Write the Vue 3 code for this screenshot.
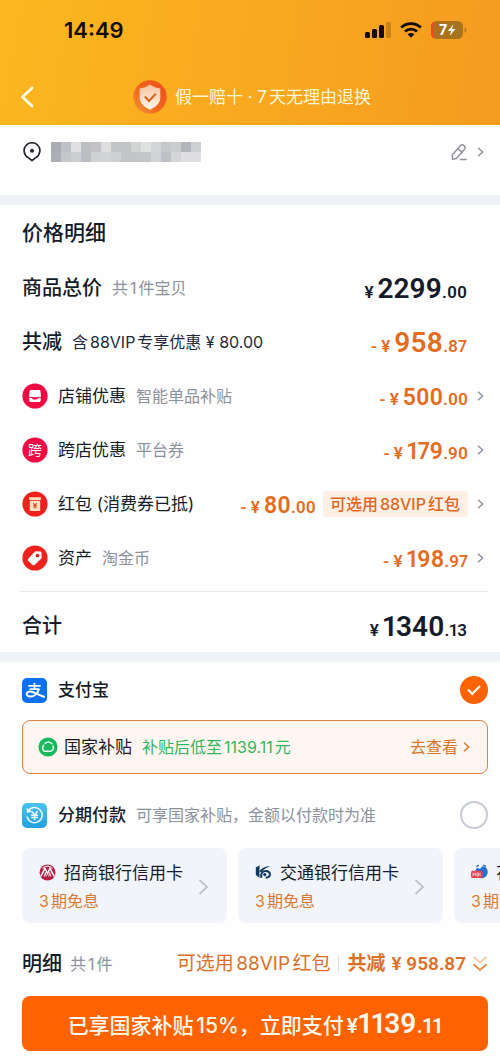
<script setup>
import { ref } from 'vue'

const payMethod = ref('alipay')

const mosaic = [
  '#a9abb2', '#c0c1c6', '#e0e0e3', '#bdbec2', '#c2c2c6', '#dededf', '#c4c5c8', '#c3c4c7', '#d2d4d4', '#e0e1e1', '#d3d6d6', '#c6c7cb', '#cbcccf', '#b4b5ba', '#cecfd2',
  '#acaeb5', '#c6c7cb', '#cdced2', '#bcbdc3', '#d0d1d4', '#d2d3d6', '#cecfd1', '#c3c4c7', '#c4c5c8', '#c5c6c9', '#d1d4d5', '#bfc1c6', '#d4d5d8', '#dfdfe2', '#dedee1',
]

const discounts = [
  { icon: 'shop', name: '店铺优惠', note: '智能单品补贴', int: '500', dec: '.00' },
  { icon: 'cross', name: '跨店优惠', note: '平台券', int: '179', dec: '.90' },
  { icon: 'packet', name: '红包 (消费券已抵)', note: '', int: '80', dec: '.00', chip: '可选用88VIP红包' },
  { icon: 'tag', name: '资产', note: '淘金币', int: '198', dec: '.97' },
]

const cards = [
  { icon: 'cmb', name: '招商银行信用卡', offer: '3期免息' },
  { icon: 'comm', name: '交通银行信用卡', offer: '3期免息' },
  { icon: 'huabei', name: '花呗', offer: '3期免息' },
]
</script>

<template>
  <div class="page">
    <header class="header">
      <div class="status">
        <span class="time">14:49</span>
        <div class="status-icons">
          <svg width="26" height="16" viewBox="0 0 26 16" aria-hidden="true">
            <rect x="0" y="10" width="5" height="6" rx="1.5" fill="#120c04" />
            <rect x="7" y="7" width="5" height="9" rx="1.5" fill="#120c04" />
            <rect x="14" y="3" width="5" height="13" rx="1.5" fill="#120c04" />
            <rect x="21" y="0" width="5" height="16" rx="1.5" fill="#c98318" />
          </svg>
          <svg width="22" height="16" viewBox="0 0 22 16" aria-hidden="true">
            <g fill="none" stroke="#120c04" stroke-width="2.8">
              <path d="M1.2 5.6C6.600 .2 15.400 .2 20.800 5.600" />
              <path d="M5 9.600c3.400-3.300 8.600-3.300 12 0" />
            </g>
            <path d="M7.600 12.200c1.900-1.700 4.900-1.700 6.800 0L11 15.800z" fill="#120c04" />
          </svg>
          <svg width="36" height="18" viewBox="0 0 36 18" aria-hidden="true">
            <defs><clipPath id="cell"><rect width="32" height="18" rx="5.500" /></clipPath></defs>
            <g clip-path="url(#cell)">
              <rect width="32" height="18" fill="#a8731c" />
              <rect width="3" height="18" fill="#ee4a26" />
            </g>
            <path d="M33.500 6.200c2.400.8 2.400 4.800 0 5.600z" fill="#b87a1c" />
            <text x="8" y="14" class="battery-text">7</text>
            <path d="M22.400 3.400 16.800 10h3.400l-1.400 4.800 5.600-6.800h-3.400z" fill="#fff" />
          </svg>
        </div>
      </div>
      <div class="nav">
        <button class="back" aria-label="返回">
          <svg width="14" height="22" viewBox="0 0 14 22"><path d="M12 2 2.500 11 12 20" fill="none" stroke="#fffbe8" stroke-width="2.800" stroke-linecap="round" stroke-linejoin="round" /></svg>
        </button>
        <div class="promise">
          <svg width="34" height="34" viewBox="0 0 34 34" aria-hidden="true">
            <defs>
              <linearGradient id="disc" x1="1" y1="0" x2="0" y2="1"><stop offset="0" stop-color="#ee4f17" /><stop offset=".55" stop-color="#f0661f" /><stop offset="1" stop-color="#f79a35" /></linearGradient>
              <linearGradient id="shield" x1="0" y1="0" x2="0" y2="1"><stop offset="0" stop-color="#fbc4a0" /><stop offset="1" stop-color="#fff6ec" /></linearGradient>
            </defs>
            <circle cx="17" cy="17" r="16.700" fill="url(#disc)" />
            <path d="M17 4.600c3.200 2.500 6.500 3.600 10.300 3.800v9.400c0 5.700-4.500 9-10.300 12-5.800-3-10.300-6.300-10.300-12V8.400C10.500 8.200 13.800 7.100 17 4.600z" fill="url(#shield)" />
            <path d="m11.800 16.600 4.200 4.300 6.800-7.100" fill="none" stroke="#d9661f" stroke-width="2.200" />
          </svg>
          <span>假一赔十 · 7天无理由退换</span>
        </div>
      </div>
    </header>

    <main>
      <section class="address">
        <svg width="18" height="20" viewBox="0 0 18 20" aria-hidden="true">
          <path d="M9 18.600 4.900 15.400A7.900 7.900 0 1 1 13.100 15.400z" fill="none" stroke="#23252e" stroke-width="1.700" stroke-linejoin="round" />
          <circle cx="9" cy="8.800" r="2" fill="#23252e" />
        </svg>
        <div class="mosaic" aria-hidden="true">
          <i v-for="(c, i) in mosaic" :key="i" :style="{ background: c }"></i>
        </div>
        <button class="edit" aria-label="修改地址">
          <svg width="16" height="17" viewBox="0 0 16 17">
            <g fill="none" stroke="#92939d" stroke-width="1.500" stroke-linejoin="round" stroke-linecap="round">
              <path d="M1.500 15.200 1.300 11 9 2c1.300-1.400 3-1.400 4.200-.3 1.200 1.100 1.200 2.500.1 3.800L5.400 14.600z" />
              <path d="m6.900 4.600 4.300 3.900M9.500 15.500h5.500" />
            </g>
          </svg>
          <svg class="chev" width="7" height="12" viewBox="0 0 7 12"><path d="m1 1.800 4.600 4.200L1 10.200" /></svg>
        </button>
      </section>

      <section class="prices">
        <h2>价格明细</h2>
        <div class="row">
          <strong>商品总价</strong><span class="note">共1件宝贝</span>
          <span class="amount big"><small>¥</small><b>2299</b><small>.00</small></span>
        </div>
        <div class="row">
          <strong>共减</strong><span class="note dark">含88VIP专享优惠 ¥ 80.00</span>
          <span class="amount mid orange"><small>- ¥</small><b>958</b><small>.87</small></span>
        </div>
        <button v-for="d in discounts" :key="d.name" class="row item">
          <svg class="badge" width="26" height="26" viewBox="0 0 26 26" aria-hidden="true">
            <circle cx="13" cy="13" r="12.600" :fill="d.icon === 'shop' || d.icon === 'cross' ? '#ee0a43' : '#ee211d'" />
            <template v-if="d.icon === 'shop'">
              <path d="M8.800 6.900h8.400c.7 0 1.100.3 1.200 1l.6 5c0 1.500-2.200 1.700-3 .5-.8 1.200-2.400 1.200-3 0-.6 1.200-2.200 1.200-3 0-.8 1.200-3 1-3-.5l.6-5c.1-.7.5-1 1.200-1z" fill="#fff" />
              <path d="M7.300 14.900h2c1 0 1.200 1.600 2.200 1.600h3c1 0 1.200-1.600 2.200-1.600h2v2.600c0 .9-.6 1.500-1.500 1.500H8.800c-.9 0-1.500-.6-1.500-1.500z" fill="#fff" />
            </template>
            <text v-else-if="d.icon === 'cross'" x="13" y="18" class="badge-text">跨</text>
            <template v-else-if="d.icon === 'packet'">
              <path d="M7.200 6.200h11.600v2.700H7.200zM7.800 9.700h10.400v9.200c0 .7-.5 1.200-1.200 1.200H9c-.7 0-1.200-.5-1.200-1.200z" fill="#ffe2c2" />
              <path d="m11.200 12 1.800 2 1.800-2M13 14v3.500M11 14.200h4M11 16h4" fill="none" stroke="#dc4928" stroke-width="1.100" />
            </template>
            <template v-else>
              <path d="m6.300 13.700 6.200-6.800c.4-.4.8-.6 1.300-.6l4.200.2c.9 0 1.500.7 1.500 1.500l.1 4.400c0 .5-.2.900-.5 1.300l-6.300 6.100c-.8.700-1.700.7-2.400 0l-4-3.700c-.8-.7-.8-1.600-.1-2.400z" fill="#fff" />
              <circle cx="15.500" cy="10.600" r="1.900" fill="#ee211d" />
            </template>
          </svg>
          <span class="name">{{ d.name }}</span>
          <span v-if="d.note" class="note">{{ d.note }}</span>
          <span class="amount small orange"><small>- ¥</small><b>{{ d.int }}</b><small>{{ d.dec }}</small></span>
          <span v-if="d.chip" class="chip">{{ d.chip }}</span>
          <svg class="chev" width="7" height="12" viewBox="0 0 7 12" aria-hidden="true"><path d="m1 1.800 4.600 4.200L1 10.200" /></svg>
        </button>
        <div class="row total">
          <strong>合计</strong>
          <span class="amount big"><small>¥</small><b>1340</b><small>.13</small></span>
        </div>
      </section>

      <section class="pay">
        <label class="method">
          <svg width="25" height="25" viewBox="0 0 25 25" aria-hidden="true">
            <rect width="25" height="25" rx="5" fill="#0b70f2" />
            <g fill="none" stroke="#fff">
              <path d="M6.300 7.800h12.400M12.500 5v6M7.500 11.200h9.800" stroke-width="1.700" />
              <path d="M17 11c-1.500 4.200-4.500 7.600-8.300 7.600-2.400 0-4-1-4-2.700 0-1.700 1.700-2.500 3.500-2.300 4.300.4 8 3.300 14.600 5.400" stroke-width="2" />
            </g>
          </svg>
          <span class="name medium">支付宝</span>
          <input v-model="payMethod" type="radio" name="pay" value="alipay" />
        </label>
        <button class="subsidy">
          <svg width="20" height="20" viewBox="0 0 20 20" aria-hidden="true">
            <circle cx="10" cy="10" r="9.600" fill="#18b85c" />
            <path d="M6.200 14.300h6.300c2.300-.9 3.300-3.200 2.600-5.400M6.200 14.300C4.600 12.800 4.300 10.300 5.400 8.300M7.200 6.400C9.200 4.700 12 4.900 13.800 6.700" fill="none" stroke="#e9fff0" stroke-width="1.500" stroke-linecap="round" />
          </svg>
          <span class="name">国家补贴</span>
          <span class="green">补贴后低至1139.11元</span>
          <span class="view">去查看</span>
          <svg class="chev warm" width="7" height="12" viewBox="0 0 7 12" aria-hidden="true"><path d="m1 1.800 4.600 4.200L1 10.200" /></svg>
        </button>
        <label class="method second">
          <svg width="25" height="25" viewBox="0 0 25 25" aria-hidden="true">
            <defs><linearGradient id="inst" x1="0" y1="0" x2="0" y2="1"><stop offset="0" stop-color="#4cc3ee" /><stop offset="1" stop-color="#249fe0" /></linearGradient></defs>
            <rect width="25" height="25" rx="5" fill="url(#inst)" />
            <g fill="none" stroke="#eefaff" stroke-width="1.500" stroke-linecap="round">
              <path d="M6 8.200a7.600 7.600 0 1 1-.8 5.800M5.300 5.800 5.800 8.800 8.800 8.300" />
              <path d="m10 8.700 2.600 3.300 2.600-3.300M12.600 12v4.600M9.800 12.300h5.600M9.800 14.500h5.600" />
            </g>
          </svg>
          <span class="name medium">分期付款</span>
          <span class="note">可享国家补贴，金额以付款时为准</span>
          <input v-model="payMethod" type="radio" name="pay" value="installment" />
        </label>
        <div class="cards">
          <button v-for="c in cards" :key="c.name" class="card">
            <span class="card-body">
              <span class="bank">
                <svg v-if="c.icon === 'cmb'" width="17" height="17" viewBox="0 0 17 17" aria-hidden="true">
                  <circle cx="8.500" cy="8.500" r="8" fill="#b31f43" />
                  <path d="M1.800 12.300 6 4.300l2.500 5.200L11 4.300l4.200 8" fill="none" stroke="#fff" stroke-width="1.500" />
                  <path d="M5.300 12.500 6.300 8.500l1 4M9.700 12.500l1-4 1 4" fill="none" stroke="#fff" stroke-width=".9" />
                  <path d="M3.500 4.500C6 1.300 11 1.300 13.500 4.500" fill="none" stroke="#f3d8df" stroke-width="1.200" />
                </svg>
                <svg v-else-if="c.icon === 'comm'" width="17" height="17" viewBox="0 0 17 17" aria-hidden="true">
                  <path d="M.8 3.500 4.500 1.300v12.400L.8 11zM4.500 7c2.300-3.600 6.500-5 11-4.800C11.800 3.200 8.500 5 6 8.800z" fill="#12395f" />
                  <path d="M6.300 13.800C5.500 9 8 6.800 10.700 6.900c2.700.1 4.200 1.700 4.200 3.400 0 2-1.500 3.300-4.200 3.400" fill="none" stroke="#12395f" stroke-width="2" />
                  <circle cx="9.800" cy="10.600" r="1.600" fill="#12395f" />
                </svg>
                <svg v-else width="17" height="17" viewBox="0 0 17 17" aria-hidden="true">
                  <path d="M4.500 6.500C5 4.500 6.500 3.500 8 4.500c.8.600 1.600.3 2-.7.5-1.300 2-1.900 3.300-1.300 2.700 1.200 3.900 4.200 3.200 7-.8 3.200-3.600 5-7 4.700L4 11z" fill="#246fd2" />
                  <path d="M5.500 3.300C6 2 7 1.300 8 1.400M12 1.200c1.200 0 2.200.5 2.900 1.300" fill="none" stroke="#246fd2" stroke-width="1.200" />
                  <rect x="0" y="6.700" width="11.500" height="7.300" rx="1.500" fill="#e34357" />
                  <path d="M2 8.700v3.300M2 10.200h2M4.300 8.700v3.300M6 9h1.500v3H6zM9 8.700v3.300" fill="none" stroke="#ffdfe2" stroke-width=".8" />
                </svg>
                <span class="name">{{ c.name }}</span>
              </span>
              <span class="offer">{{ c.offer }}</span>
            </span>
            <svg width="11" height="18" viewBox="0 0 11 18" aria-hidden="true"><path d="m1.500 2 7.500 7-7.500 7" fill="none" stroke="#bfc2c8" stroke-width="1.800" /></svg>
          </button>
        </div>
      </section>
    </main>

    <footer class="footer">
      <div class="summary">
        <strong>明细</strong><span class="count">共1件</span>
        <button class="detail">
          <span>可选用88VIP红包</span>
          <i class="sep"></i>
          <b>共减</b><b class="saved">¥ 958.87</b>
          <svg width="16" height="18" viewBox="0 0 16 18" aria-hidden="true">
            <g fill="none" stroke-width="1.700"><path d="m1.500 2 6.500 5.500L14.500 2" stroke="#f3c7a4" /><path d="m1.500 9.500 6.500 5.500 6.500-5.500" stroke="#e38443" /></g>
          </svg>
        </button>
      </div>
      <button class="submit">
        <span>已享国家补贴15%，立即支付</span><span class="submit-price">¥<b>1139</b>.11</span>
      </button>
    </footer>
  </div>
</template>

<style>
body {
  margin: 0;
  background: #fefefe;
}
</style>

<style scoped>
.page {
  font-family: Inter, "Noto Sans CJK SC", sans-serif;
  font-size: 16px;
  line-height: 24px;
  color: #151b28;
  text-autospace: normal;
  overflow: hidden;
}
button {
  font: inherit;
  color: inherit;
  background: none;
  border: 0;
  padding: 0;
  text-align: left;
  cursor: pointer;
}
svg {
  flex: none;
  display: block;
}
.header {
  background: linear-gradient(100deg, #fcb71f, #f59b20);
}
.status {
  height: 60px;
  padding: 0 33px 0 64px;
  display: flex;
  align-items: center;
  justify-content: space-between;
}
.time {
  font-size: 22px;
  font-weight: 600;
  color: #120c04;
}
.status-icons {
  display: flex;
  align-items: center;
  gap: 9px;
}
.battery-text {
  font: 700 14px Inter, sans-serif;
  fill: #fff;
}
.nav {
  height: 65px;
  padding: 0 20px;
  display: grid;
  grid-template-columns: 20px 1fr 16px;
  align-items: center;
}
.back {
  height: 44px;
  padding-top: 8px;
}
.promise {
  display: flex;
  align-items: center;
  justify-content: center;
  gap: 8px;
  padding-top: 8px;
  font-size: 17px;
  color: #fff6d8;
}
.address {
  display: flex;
  align-items: center;
  gap: 10px;
  height: 54px;
  padding: 0 16px 16px 23px;
  border-bottom: 10px solid #eff3f7;
}
.mosaic {
  display: grid;
  grid-template-columns: repeat(15, 10px);
  grid-auto-rows: 10px;
}
.edit {
  display: flex;
  align-items: center;
  gap: 10px;
  margin-left: auto;
}
.chev path {
  fill: none;
  stroke: #8d95a3;
  stroke-width: 1.5;
}
.chev.warm path {
  stroke: #d6762c;
}
.prices {
  padding: 0 16px 0 22px;
  border-bottom: 10px solid #eff3f7;
}
h2 {
  margin: 0;
  font-size: 21px;
  font-weight: 500;
  line-height: 56px;
}
.row {
  display: flex;
  align-items: center;
  width: 100%;
  height: 54px;
  padding-right: 17px;
  box-sizing: border-box;
}
.row.item {
  padding-right: 0;
}
strong {
  font-size: 20px;
  font-weight: 500;
}
.note {
  margin-left: 10px;
  color: #8b919d;
}
.note.dark {
  color: #23293a;
}
.name {
  font-size: 17px;
}
.medium {
  font-weight: 500;
}
.badge {
  margin-right: 10px;
}
.badge-text {
  font: 14px "Noto Sans CJK SC", sans-serif;
  fill: #fff;
  text-anchor: middle;
}
.amount {
  margin-left: auto;
  display: flex;
  align-items: baseline;
  font-family: Roboto, sans-serif;
  font-variant-numeric: proportional-nums;
  font-weight: 600;
  line-height: 32px;
  padding-top: 5px;
}
.amount b {
  font-weight: 600;
  margin-left: 4px;
}
.amount small {
  font-size: 17px;
}
.big b {
  font-size: 28px;
}
.mid b {
  font-size: 28px;
}
.small b {
  font-size: 23px;
}
.orange {
  color: #e56c1f;
}
.chip {
  margin-left: 7px;
  padding: 1px 8px 1px 7px;
  background: #fff0e7;
  color: #e0681f;
  font-weight: 500;
  border-radius: 3px;
}
.item .chev {
  margin-left: 9px;
}
.total {
  height: 67px;
  position: relative;
  padding-top: 14px;
}
.total::before {
  content: "";
  position: absolute;
  left: -2px;
  right: -4px;
  top: 6px;
  height: 1px;
  background: #e5e7ea;
}
.pay {
  padding: 0 12px 0 22px;
}
.method {
  display: flex;
  align-items: center;
  height: 56px;
}
.method .name {
  margin-left: 11px;
}
.method.second {
  height: 66px;
  margin-top: 8px;
}
input[type="radio"] {
  appearance: none;
  box-sizing: border-box;
  width: 28px;
  height: 28px;
  flex: none;
  margin: 0 0 0 auto;
  border: 2px solid #c7cbd4;
  border-radius: 50%;
  display: grid;
  place-items: center;
}
input[type="radio"]:checked {
  border-color: #ff6200;
  background: #ff6200;
}
input[type="radio"]:checked::after {
  content: "";
  box-sizing: border-box;
  width: 12px;
  height: 7px;
  margin-bottom: 4px;
  border: solid #fff;
  border-width: 0 0 2px 2px;
  transform: rotate(-45deg);
}
.subsidy {
  display: flex;
  align-items: center;
  width: 100%;
  height: 54px;
  margin-top: 2px;
  padding: 0 17px 0 15px;
  box-sizing: border-box;
  border: 1px solid #db8245;
  border-radius: 8px;
  background: #fff6f1;
}
.subsidy .name {
  margin-left: 6px;
}
.green {
  margin-left: 10px;
  color: #35b45f;
}
.view {
  margin-left: auto;
  margin-right: 5px;
  color: #d6762c;
}
.cards {
  display: flex;
  gap: 11px;
  margin-right: -12px;
  overflow: hidden;
}
.card {
  flex: none;
  width: 205px;
  height: 75px;
  padding: 2px 18px 0 17px;
  box-sizing: border-box;
  border-radius: 8px;
  background: #f1f4f8;
  display: flex;
  align-items: center;
  justify-content: space-between;
}
.card-body {
  display: grid;
  gap: 4px;
}
.bank {
  display: flex;
  align-items: center;
  gap: 8px;
  white-space: nowrap;
}
.offer {
  color: #d97a35;
}
.footer {
  padding: 0 12px 9px 22px;
}
.summary {
  display: flex;
  align-items: center;
  height: 73px;
  padding-top: 8px;
  box-sizing: border-box;
}
.count {
  margin-left: 8px;
  color: #8b919d;
}
.detail {
  margin-left: auto;
  display: flex;
  align-items: center;
  font-size: 19px;
  color: #dc7027;
  white-space: nowrap;
}
.sep {
  width: 1px;
  height: 18px;
  margin: 0 8px;
  background: #e6dcd5;
}
.detail b {
  font-weight: 600;
}
.saved {
  font-family: Roboto, sans-serif;
  font-size: 19px;
  margin: 0 6px;
}
.submit {
  display: flex;
  align-items: baseline;
  justify-content: center;
  gap: 3px;
  width: 100%;
  height: 55px;
  border-radius: 8px;
  background: #ff6200;
  color: #fffaf0;
  font-size: 21px;
  font-weight: 500;
  line-height: 55px;
  white-space: nowrap;
}
.submit-price {
  font-family: Roboto, sans-serif;
  font-variant-numeric: proportional-nums;
  font-weight: 600;
}
.submit-price b {
  font-size: 28px;
  font-weight: 600;
}
</style>
